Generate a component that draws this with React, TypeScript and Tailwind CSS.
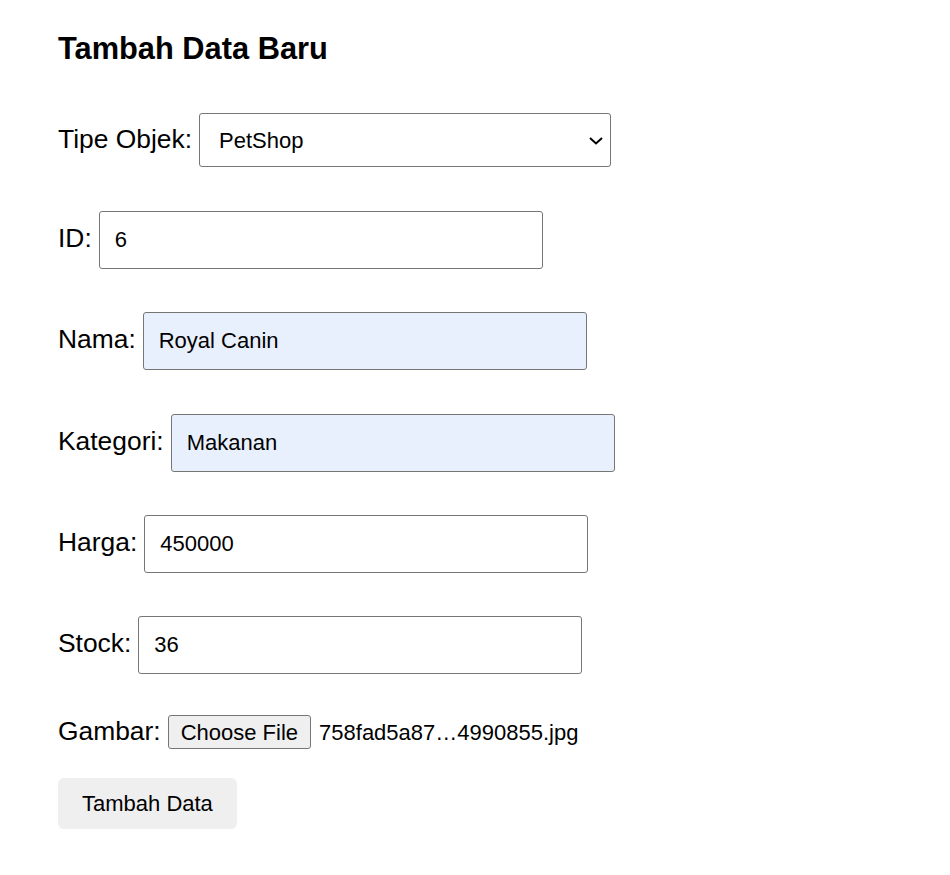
import { ReactNode } from "react";

const inputCls =
  "h-[58px] w-[444px] rounded-[3px] border border-[#767676] px-[15px] text-[22px] text-black outline-none";

function Row({ label, children, className }: { label: string; children: ReactNode; className?: string }) {
  return (
    <div className={"flex items-baseline gap-[7px] " + (className ?? "")}>
      <label className="text-[26.4px] leading-[30px] text-black">{label}</label>
      {children}
    </div>
  );
}

export default function App() {
  return (
    <div className="min-h-screen bg-white pl-[58px] pt-[32px] font-['Liberation_Sans',Arial,sans-serif] text-black">
      <h3 className="text-[30.8px] font-bold leading-[34px]">Tambah Data Baru</h3>

      <Row label="Tipe Objek:" className="mt-[47px]">
        <div className="relative">
          <select
            defaultValue="PetShop"
            className="h-[54px] w-[412px] appearance-none rounded-[3px] border border-[#767676] bg-white pl-[19px] text-[22px] text-black outline-none"
          >
            <option>PetShop</option>
            <option>Produk</option>
          </select>
          <svg
            className="pointer-events-none absolute right-[8px] top-[24px]"
            width="14"
            height="8"
            viewBox="0 0 14 8"
            fill="none"
            stroke="black"
            strokeWidth="2"
          >
            <path d="M1 1l6 5.5L13 1" />
          </svg>
        </div>
      </Row>

      <Row label="ID:" className="mt-[44px]">
        <input className={inputCls + " bg-white"} defaultValue="6" />
      </Row>

      <Row label="Nama:" className="mt-[43px]">
        <input className={inputCls + " bg-[#e8f0fe]"} defaultValue="Royal Canin" />
      </Row>

      <Row label="Kategori:" className="mt-[44px]">
        <input className={inputCls + " bg-[#e8f0fe]"} defaultValue="Makanan" />
      </Row>

      <Row label="Harga:" className="mt-[43px]">
        <input className={inputCls + " bg-white"} defaultValue="450000" />
      </Row>

      <Row label="Stock:" className="mt-[43px]">
        <input className={inputCls + " bg-white"} defaultValue="36" />
      </Row>

      <Row label="Gambar:" className="mt-[41px]">
        <div className="flex items-baseline gap-[8px] text-[22px]">
          <button className="h-[34px] rounded-[3px] border border-[#767676] bg-[#efefef] px-[12px] text-black">
            Choose File
          </button>
          <span>758fad5a87…4990855.jpg</span>
        </div>
      </Row>

      <button className="mt-[29px] h-[51px] rounded-[6px] bg-[#efefef] px-[24px] text-[22px] text-black">
        Tambah Data
      </button>
    </div>
  );
}
